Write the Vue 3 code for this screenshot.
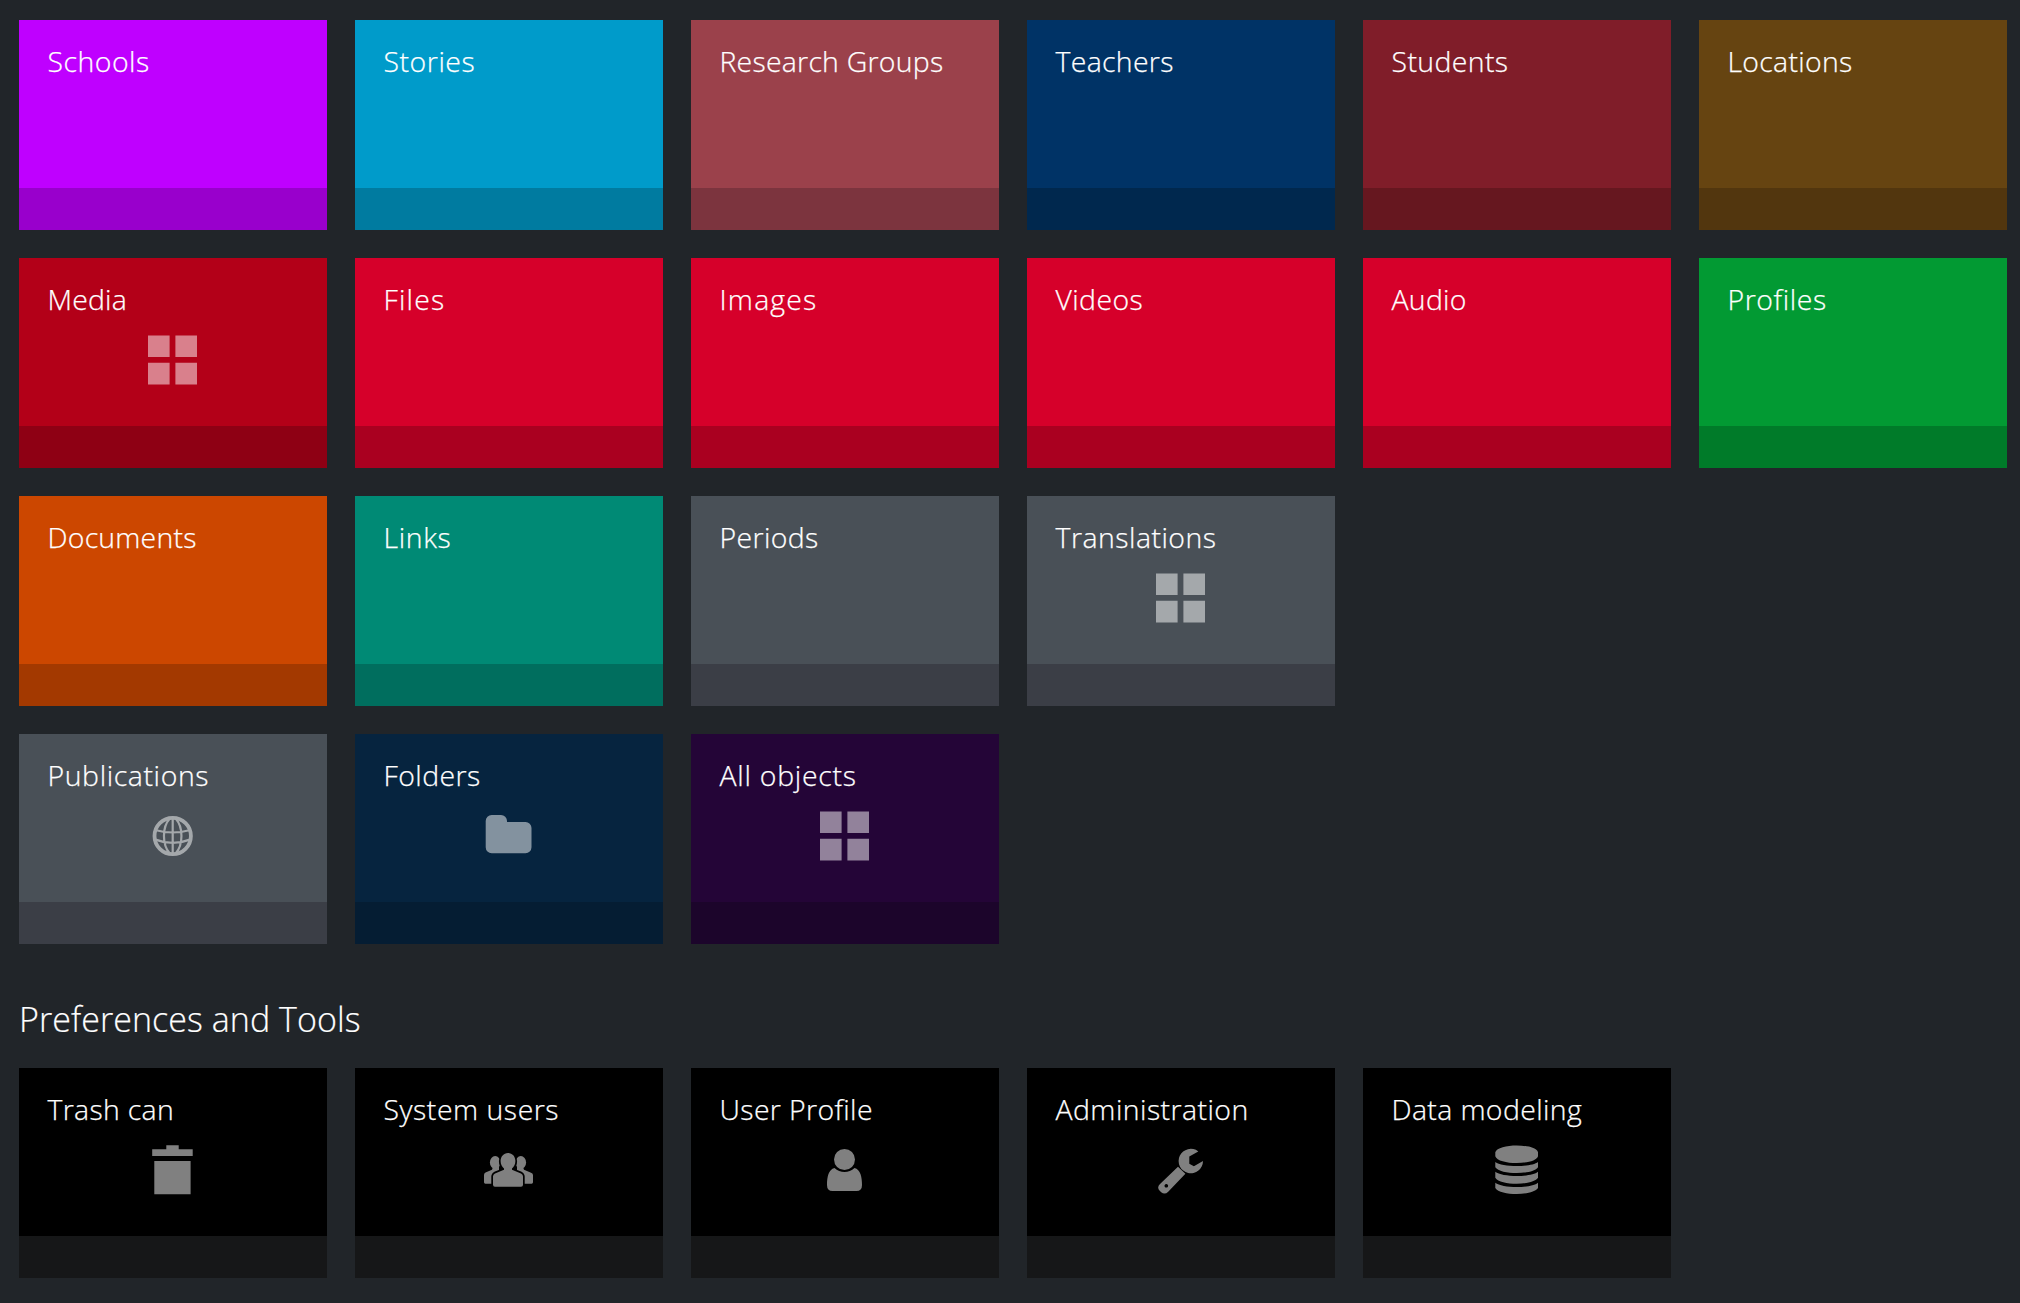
<script setup>
const sections = [
  {
    title: '',
    rows: [
      [
        { label: 'Schools', color: '#bf00ff', band: '#9900cc', tracking: 0.5 },
        { label: 'Stories', color: '#009bca', band: '#007ba0', tracking: 0.55 },
        { label: 'Research Groups', color: '#9b414b', band: '#7c343e', tracking: 0.25 },
        { label: 'Teachers', color: '#003366', band: '#00284e', tracking: 0.33 },
        { label: 'Students', color: '#801d29', band: '#66171f', tracking: 0.4 },
        { label: 'Locations', color: '#664411', band: '#52360e', tracking: 0.3 },
        { label: 'Media', color: '#b30018', band: '#8e0014', tracking: 0.2, icon: 'grid' },
        { label: 'Files', color: '#d6002a', band: '#aa0020', tracking: 1.2 },
        { label: 'Images', color: '#d6002a', band: '#aa0020', tracking: 1.2 },
        { label: 'Videos', color: '#d6002a', band: '#aa0020', tracking: 0.4 },
        { label: 'Audio', color: '#d6002a', band: '#aa0020', tracking: 0.3 },
        { label: 'Profiles', color: '#029a33', band: '#007b29', tracking: 0.6 },
        { label: 'Documents', color: '#cc4700', band: '#a33900', tracking: 0.22 },
        { label: 'Links', color: '#008a75', band: '#006e5e', tracking: 0.65 },
        { label: 'Periods', color: '#495057', band: '#3b3e46', tracking: 0.4 },
        { label: 'Translations', color: '#495057', band: '#3b3e46', tracking: 0.5, icon: 'grid' },
      ],
      [
        { label: 'Publications', color: '#495057', band: '#3b3e46', tracking: 0.62, icon: 'globe' },
        { label: 'Folders', color: '#06243f', band: '#051d33', tracking: 0.45, icon: 'folder' },
        { label: 'All objects', color: '#240537', band: '#1c052b', tracking: 0.75, icon: 'grid' },
      ],
    ],
  },
  {
    title: 'Preferences and Tools',
    rows: [
      [
        { label: 'Trash can', color: '#000000', band: '#161718', tracking: 0.32, icon: 'trash' },
        { label: 'System users', color: '#000000', band: '#161718', tracking: 0.54, icon: 'users' },
        { label: 'User Profile', color: '#000000', band: '#161718', tracking: 0.37, icon: 'user' },
        { label: 'Administration', color: '#000000', band: '#161718', tracking: 0.46, icon: 'wrench' },
        { label: 'Data modeling', color: '#000000', band: '#161718', tracking: 0.38, icon: 'database' },
      ],
    ],
  },
]
</script>

<template>
  <main class="dashboard">
    <section v-for="(section, s) in sections" :key="s" class="section">
      <h2 v-if="section.title" class="heading">{{ section.title }}</h2>
      <div v-for="(row, r) in section.rows" :key="r" class="tiles">
        <a v-for="tile in row" :key="tile.label" class="tile" :style="{ backgroundColor: tile.color }">
          <span class="label" :style="{ letterSpacing: tile.tracking + 'px' }">{{ tile.label }}</span>
          <svg v-if="tile.icon" class="icon" viewBox="0 0 60 60" width="60" height="60" fill="#fff">
            <path
              v-if="tile.icon === 'grid'"
              d="M5 5.400h21.600V27H5zM32.400 5.400H54V27H32.400zM5 32.800h21.600v21.600H5zM32.400 32.800H54v21.600H32.400z"
            />
            <g v-else-if="tile.icon === 'globe'" fill="none" stroke="#fff">
              <circle cx="29.7" cy="30" r="18.2" stroke-width="3.800" />
              <path
                stroke-width="2.200"
                d="M29.7 12v36M26.8 12.5C19 21 19 39 26.8 47.5M32.6 12.5C40.4 21 40.4 39 32.6 47.5M13.2 24.2Q29.7 28.8 46.2 24.2M12.5 33.6Q29.7 40.2 46.9 33.6"
              />
            </g>
            <path
              v-else-if="tile.icon === 'folder'"
              d="M12.7 9H22a6 6 0 0 1 6 6v1h18.500a6 6 0 0 1 6 6v19.300a6 6 0 0 1-6 6h-33.800a6 6 0 0 1-6-6V15a6 6 0 0 1 6-6z"
            />
            <path v-else-if="tile.icon === 'trash'" d="M23.300 5.200h12.400v4h14v6.800H9.200V9.200h14.100zM11.300 21h36.300v33.200H11.300z" />
            <g v-else-if="tile.icon === 'users'">
              <ellipse cx="16.200" cy="22.500" rx="5.300" ry="6.400" />
              <ellipse cx="41.800" cy="22.500" rx="5.300" ry="6.400" />
              <path
                d="M14 27L13 29.800L6.500 32.600Q5 33.300 5 35V42.300Q5 43.700 6.400 43.700H20V27zM44 27L45 29.800L51.500 32.600Q54 33.300 54 35V42.300Q54 43.700 52.600 43.700H38V27z"
              />
              <path
                class="front"
                d="M29 12.900c-4.400 0-7.400 3.600-7.400 8.200 0 3.200 1.300 5.900 3.400 7.300v1.400L16 33.400Q14 34.400 14 36.600V44.700Q14 46.700 16 46.700H42Q44 46.700 44 44.700V36.600Q44 34.400 42 33.400L33 29.800V28.400c2.100-1.400 3.400-4.100 3.400-7.300 0-4.600-3-8.200-7.400-8.200z"
              />
            </g>
            <g v-else-if="tile.icon === 'user'">
              <circle cx="29.500" cy="19.500" r="10.500" />
              <path
                d="M19.500 28C13.500 29.500 12 37 12 45Q12 51 17.500 51H41.500Q47 51 47 45C47 37 45.500 29.500 39.500 28C34 33.400 25 33.400 19.500 28z"
              />
            </g>
            <path
              v-else-if="tile.icon === 'wrench'"
              fill-rule="evenodd"
              d="M47.300 11.400A12.200 12.200 0 1 0 52 21L42.900 26.200L38.300 23.800V16.600zM27 26.700L34.400 33.800L17.200 51.700Q13.700 55.200 10.200 52.200L8.700 50.700Q5.500 47.200 9 43.900zM15.300 44a1.800 1.800 0 1 0 .01 0z"
            />
            <path
              v-else-if="tile.icon === 'database'"
              d="M8.300 12.200C11 3.200 48.300 3.200 51 12.200V16.200C48.300 25.300 11 25.300 8.300 16.200zM8.300 22C15 27.400 44.300 27.400 51 22V27.200C46 35 13.300 35 8.300 27.200zM8.300 31.800C15 37.400 44.300 37.400 51 31.800V37.700C46 45.700 13.300 45.700 8.300 37.700zM8.300 42.700C15 48.400 44.300 48.400 51 42.700V48C46 56 13.300 56 8.300 48z"
            />
          </svg>
          <span class="band" :style="{ backgroundColor: tile.band }"></span>
        </a>
      </div>
    </section>
  </main>
</template>

<style>
body {
  background: #212529;
}
</style>

<style scoped>
.dashboard {
  box-sizing: border-box;
  min-height: 1303px;
  padding: 20px 0 0 19px;
  background: #212529;
  color: #fff;
  font-family: 'Open Sans', 'Noto Sans', sans-serif;
  font-weight: 300;
}

.section,
.tiles {
  display: grid;
}

.section {
  gap: 28px;
}

.tiles {
  grid-template-columns: repeat(6, 308px);
  gap: 28px;
}

.heading {
  margin: 52px 0 -2px;
  font-size: 34px;
  font-weight: 300;
  line-height: 46px;
  letter-spacing: 0.05px;
  -webkit-text-stroke: 0.2px #fff;
}

.tile {
  display: flex;
  flex-direction: column;
  height: 210px;
}

.label {
  padding: 22px 28px 0 28.5px;
  font-size: 28.4px;
  line-height: 38px;
  white-space: nowrap;
  -webkit-text-stroke: 0.25px #fff;
}

.icon {
  align-self: center;
  margin-top: 12px;
  opacity: 0.5;
}

.front {
  stroke: #000;
  stroke-width: 3.4px;
  paint-order: stroke;
}

.band {
  height: 42px;
  margin-top: auto;
}
</style>
